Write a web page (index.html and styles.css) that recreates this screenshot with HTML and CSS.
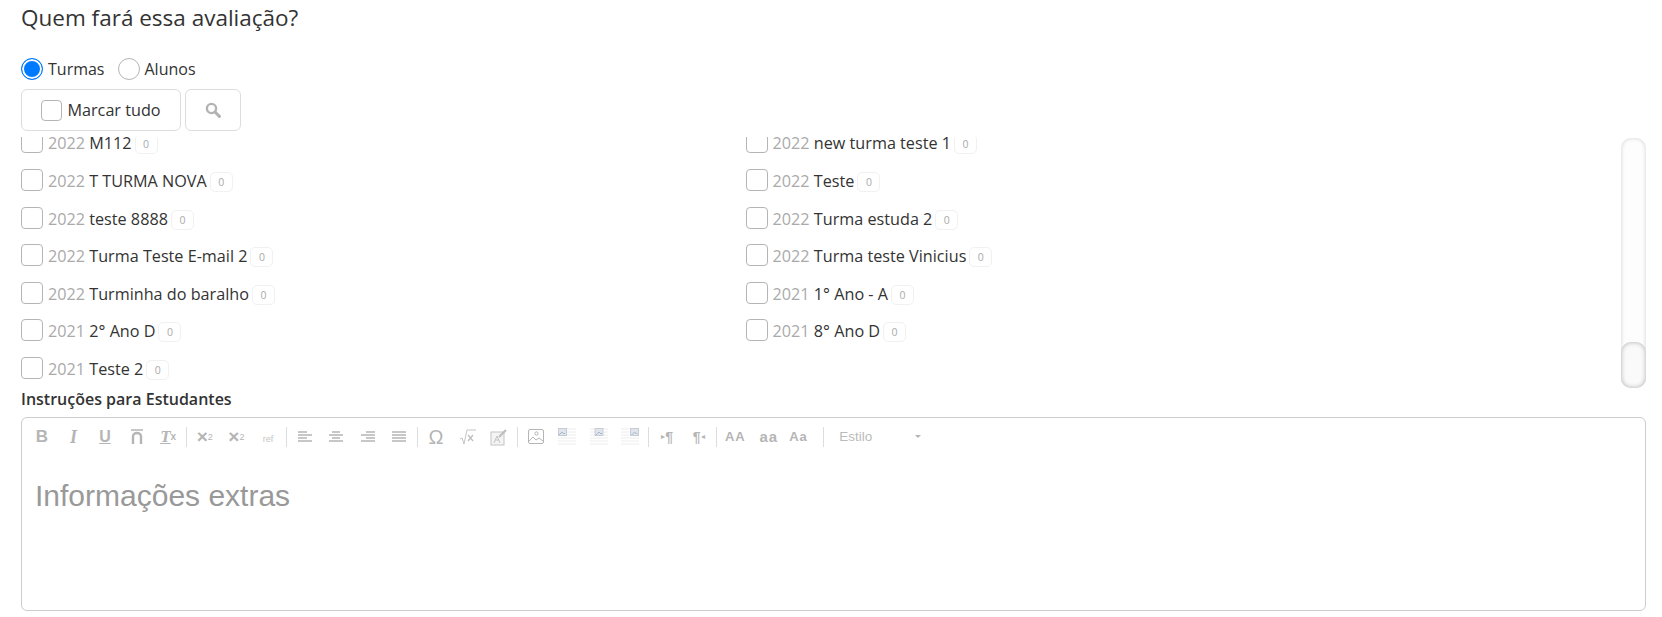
FILE: index.html
```html
<!DOCTYPE html>
<html lang="pt-BR">
<head>
    <meta charset="UTF-8">
    <meta name="viewport" content="width=device-width, initial-scale=1.0">
    <title>Quem fará essa avaliação?</title>
    <link rel="stylesheet" href="styles.css">
</head>
<body>
    <h2 class="titulo">Quem fará essa avaliação?</h2>

    <div class="tipo">
        <label class="radio"><span class="radio-bola ativo"></span>Turmas</label>
        <label class="radio"><span class="radio-bola"></span>Alunos</label>
    </div>

    <div class="acoes">
        <button class="botao botao-marcar"><span class="caixa"></span>Marcar tudo</button>
        <button class="botao botao-busca">
            <svg width="16" height="16" viewBox="0 0 16 16"><circle cx="6.5" cy="6.5" r="4.6" fill="none" stroke="#b3b3b3" stroke-width="2.4"/><path d="M10 10l4.4 4.4" stroke="#b3b3b3" stroke-width="3" stroke-linecap="round"/></svg>
        </button>
    </div>

    <div class="lista-area">
        <div class="lista-janela">
            <ul class="lista">
                <li class="item"><span class="caixa"></span><span class="nome"><span class="ano">2022</span> M112</span><span class="qtd">0</span></li>
                <li class="item"><span class="caixa"></span><span class="nome"><span class="ano">2022</span> new turma teste 1</span><span class="qtd">0</span></li>
                <li class="item"><span class="caixa"></span><span class="nome"><span class="ano">2022</span> T TURMA NOVA</span><span class="qtd">0</span></li>
                <li class="item"><span class="caixa"></span><span class="nome"><span class="ano">2022</span> Teste</span><span class="qtd">0</span></li>
                <li class="item"><span class="caixa"></span><span class="nome"><span class="ano">2022</span> teste 8888</span><span class="qtd">0</span></li>
                <li class="item"><span class="caixa"></span><span class="nome"><span class="ano">2022</span> Turma estuda 2</span><span class="qtd">0</span></li>
                <li class="item"><span class="caixa"></span><span class="nome"><span class="ano">2022</span> Turma Teste E-mail 2</span><span class="qtd">0</span></li>
                <li class="item"><span class="caixa"></span><span class="nome"><span class="ano">2022</span> Turma teste Vinicius</span><span class="qtd">0</span></li>
                <li class="item"><span class="caixa"></span><span class="nome"><span class="ano">2022</span> Turminha do baralho</span><span class="qtd">0</span></li>
                <li class="item"><span class="caixa"></span><span class="nome"><span class="ano">2021</span> 1° Ano - A</span><span class="qtd">0</span></li>
                <li class="item"><span class="caixa"></span><span class="nome"><span class="ano">2021</span> 2° Ano D</span><span class="qtd">0</span></li>
                <li class="item"><span class="caixa"></span><span class="nome"><span class="ano">2021</span> 8° Ano D</span><span class="qtd">0</span></li>
                <li class="item"><span class="caixa"></span><span class="nome"><span class="ano">2021</span> Teste 2</span><span class="qtd">0</span></li>
            </ul>
        </div>
        <div class="barra"><div class="barra-pega"></div></div>
    </div>

    <div class="rotulo">Instruções para Estudantes</div>

    <div class="editor">
        <div class="toolbar">
            <span class="bt bt-b">B</span>
            <span class="bt bt-i">I</span>
            <span class="bt bt-u">U</span>
            <span class="bt"><svg width="14" height="16" viewBox="0 0 14 16"><path d="M1 1h12" stroke="#b5b5b5" stroke-width="1.5"/><path d="M3 15V7.500a4 3.500 0 0 1 8 0V15" fill="none" stroke="#b5b5b5" stroke-width="2.400"/></svg></span>
            <span class="bt bt-tx"><i>T</i><sub>x</sub></span>
            <span class="sep"></span>
            <span class="bt bt-sub">×<sub>2</sub></span>
            <span class="bt bt-sub">×<sup>2</sup></span>
            <span class="bt bt-ref">ref</span>
            <span class="sep"></span>
            <span class="bt"><svg width="16" height="14" viewBox="0 0 16 14"><path d="M1 2h9M1 5h14M1 8h9M1 11h14" stroke="#b5b5b5" stroke-width="1.5"/></svg></span>
            <span class="bt"><svg width="16" height="14" viewBox="0 0 16 14"><path d="M4 2h8M1 5h14M4 8h8M1 11h14" stroke="#b5b5b5" stroke-width="1.5"/></svg></span>
            <span class="bt"><svg width="16" height="14" viewBox="0 0 16 14"><path d="M6 2h9M1 5h14M6 8h9M1 11h14" stroke="#b5b5b5" stroke-width="1.5"/></svg></span>
            <span class="bt"><svg width="16" height="14" viewBox="0 0 16 14"><path d="M1 2h14M1 5h14M1 8h14M1 11h14" stroke="#b5b5b5" stroke-width="1.5"/></svg></span>
            <span class="sep"></span>
            <span class="bt bt-omega">Ω</span>
            <span class="bt"><svg width="18" height="16" viewBox="0 0 18 16"><path d="M1 10l2-1 2 6 3-14h9" fill="none" stroke="#c4c4c4"/><path d="M9 6l5 6M14 6l-5 6" stroke="#bdbdbd" stroke-width="1.2"/></svg></span>
            <span class="bt"><svg width="18" height="18" viewBox="0 0 18 18"><rect x="1" y="4" width="13" height="13" fill="#f4f4f4" stroke="#c4c4c4"/><path d="M4 15l3-7 3 7M5 12h4" fill="none" stroke="#c4c4c4"/><path d="M9 9l7-7" stroke="#bdbdbd" stroke-width="2.2"/></svg></span>
            <span class="sep"></span>
            <span class="bt"><svg width="16" height="15" viewBox="0 0 16 15"><rect x="0.5" y="0.5" width="15" height="14" rx="1.5" fill="none" stroke="#b5b5b5"/><circle cx="8.5" cy="4.5" r="1.6" fill="none" stroke="#b5b5b5"/><path d="M1 12l4-4 3 3 3-2 4 3" fill="none" stroke="#b5b5b5"/></svg></span>
            <span class="bt"><svg width="18" height="18" viewBox="0 0 18 18"><path d="M9 1h9M9 4h9M9 7h9M0 10h18M0 13h18M0 16h18" stroke="#ececec"/><rect x="0.500" y="0.500" width="8" height="7" fill="#dfe5ec" stroke="#c8ccd2"/><path d="M1 7l3-3 2 2 1-1" fill="none" stroke="#a8b8cc"/></svg></span>
            <span class="bt"><svg width="18" height="18" viewBox="0 0 18 18"><path d="M0 1h4M14 1h4M0 4h4M14 4h4M0 7h4M14 7h4M0 10h18M0 13h18M0 16h18" stroke="#ececec"/><rect x="5" y="0.500" width="8" height="7" fill="#dfe5ec" stroke="#c8ccd2"/><path d="M6 7l3-3 2 2 1-1" fill="none" stroke="#a8b8cc"/></svg></span>
            <span class="bt"><svg width="18" height="18" viewBox="0 0 18 18"><path d="M0 1h8M0 4h8M0 7h8M0 10h18M0 13h18M0 16h18" stroke="#ececec"/><rect x="9.500" y="0.500" width="8" height="7" fill="#dfe5ec" stroke="#c8ccd2"/><path d="M10.500 7l3-3 2 2 1-1" fill="none" stroke="#a8b8cc"/></svg></span>
            <span class="sep"></span>
            <span class="bt bt-par"><small>▸</small>¶</span>
            <span class="bt bt-par">¶<small>◂</small></span>
            <span class="sep"></span>
            <span class="bt bt-caso">AA</span>
            <span class="bt bt-caso bt-caso-min">aa</span>
            <span class="bt bt-caso">Aa</span>
            <span class="sep sep-combo"></span>
            <span class="combo"><span>Estilo</span><span class="combo-seta"></span></span>
        </div>
        <div class="editor-texto">Informações extras</div>
    </div>
</body>
</html>
```

FILE: styles.css
```css
* {
    box-sizing: border-box;
}

body {
    margin: 0;
    padding: 0 16px 0 21px;
    font-family: "Open Sans", sans-serif;
    color: #333;
    background-color: #fff;
    overflow: hidden;
}

.titulo {
    margin: 0;
    padding-top: 3px;
    height: 58px;
    font-size: 22.5px;
    line-height: 30px;
    font-weight: 400;
}

.tipo {
    display: flex;
    align-items: center;
    height: 22px;
    font-size: 16px;
}

.radio {
    display: flex;
    align-items: center;
    margin-right: 13px;
}

.radio-bola {
    width: 22px;
    height: 22px;
    margin-right: 5px;
    border: 1px solid #b5b5b5;
    border-radius: 50%;
    background-color: #fff;
}

.radio-bola.ativo {
    border-color: #007bff;
    background-color: #007bff;
    box-shadow: inset 0 0 0 2px #fff;
}

.acoes {
    display: flex;
    margin-top: 9px;
    height: 42px;
}

.botao {
    display: flex;
    align-items: center;
    justify-content: center;
    height: 42px;
    padding: 0;
    border: 1px solid #ddd;
    border-radius: 6px;
    background-color: #fff;
    font-family: inherit;
    font-size: 16.2px;
    color: #333;
}

.botao-marcar {
    width: 160px;
}

.botao-marcar .caixa {
    width: 21px;
    height: 21px;
    margin-right: 5px;
}

.botao-busca {
    width: 56px;
    margin-left: 4px;
}

.lista-area {
    display: flex;
    margin-top: 6px;
    height: 251px;
}

.lista-janela {
    width: 1600px;
    overflow: hidden;
}

.lista {
    display: grid;
    grid-template-columns: 724.6px 1fr;
    grid-auto-rows: 37.6px;
    margin: -5.6px 0 0;
    padding: 0;
    list-style: none;
}

.item {
    display: flex;
    align-items: center;
    height: 22px;
    font-size: 16.2px;
    white-space: pre;
}

.nome {
    margin-top: 2px;
    line-height: 12px;
}

.caixa {
    display: block;
    flex: none;
    width: 22px;
    height: 22px;
    margin-right: 5px;
    border: 1.5px solid #b5b5b5;
    border-radius: 4px;
    background-color: #fff;
}

.ano {
    color: #aaa;
}

.qtd {
    display: flex;
    align-items: center;
    justify-content: center;
    width: 23px;
    height: 20px;
    margin: 4px 0 0 3px;
    border: 1px solid #f1f1f1;
    border-radius: 5px;
    font-size: 10.5px;
    line-height: 12px;
    color: #aaa;
}

.barra {
    display: flex;
    align-items: flex-end;
    width: 25px;
    height: 250px;
    margin-top: 1px;
    border-radius: 10px;
    background-color: #fdfdfd;
    box-shadow: inset 0 0 4px rgba(0, 0, 0, 0.18);
}

.barra-pega {
    width: 100%;
    height: 46px;
    border-radius: 10px;
    background-color: #fafafa;
    box-shadow: inset 0 0 5px rgba(0, 0, 0, 0.3);
}

.rotulo {
    height: 29px;
    font-size: 16px;
    font-weight: 600;
    line-height: 23px;
}

.editor {
    height: 194px;
    border: 1px solid #ccc;
    border-radius: 6px;
}

.toolbar {
    display: flex;
    align-items: center;
    height: 37px;
    padding-left: 4px;
    color: #b5b5b5;
    font-family: "Liberation Sans", sans-serif;
}

.bt {
    display: flex;
    align-items: center;
    justify-content: center;
    width: 31.6px;
    height: 20px;
    font-size: 16px;
    line-height: 20px;
}

.sep {
    width: 1px;
    height: 20px;
    margin: 0 2px;
    background-color: #ddd;
}

.bt-b {
    font-weight: 700;
    font-size: 17px;
}

.bt-i {
    font-style: italic;
    font-family: "Liberation Serif", serif;
    font-weight: 700;
    font-size: 18px;
}

.bt-u {
    font-weight: 700;
    text-decoration: underline;
    font-size: 16px;
}

.bt-tx {
    font-family: "Liberation Serif", serif;
    font-size: 17px;
    font-weight: 700;
}

.bt-tx i {
    text-decoration: underline;
}

.bt-tx sub {
    font-family: "Liberation Sans", sans-serif;
    font-size: 10px;
    font-weight: 700;
    line-height: 0;
}

.bt-sub {
    font-weight: 700;
    font-size: 19px;
}

.bt-sub sub,
.bt-sub sup {
    font-size: 9px;
    font-weight: 400;
    line-height: 0;
}

.bt-ref {
    padding-top: 5px;
    font-size: 9px;
    color: #c6c6c6;
}

.bt-omega {
    font-size: 20px;
}

.bt-par {
    font-size: 14px;
    font-weight: 700;
}

.bt-par small {
    font-size: 8px;
    font-weight: 400;
}

.bt-caso {
    font-size: 13px;
    font-weight: 700;
    letter-spacing: 1px;
}

.bt-caso-min {
    font-size: 15px;
    padding-left: 4px;
}

.sep-combo {
    margin: 0 0 0 9px;
}

.combo {
    display: flex;
    align-items: center;
    justify-content: space-between;
    width: 97px;
    padding: 0 0 0 15px;
    font-size: 13.5px;
    color: #bbb;
}

.combo-seta {
    width: 0;
    height: 0;
    border-left: 3px solid transparent;
    border-right: 3px solid transparent;
    border-top: 3px solid #b5b5b5;
}

.editor-texto {
    padding: 24px 12px 0 13px;
    font-family: "Liberation Sans", sans-serif;
    font-size: 30px;
    line-height: 34px;
    color: #999;
}
```
